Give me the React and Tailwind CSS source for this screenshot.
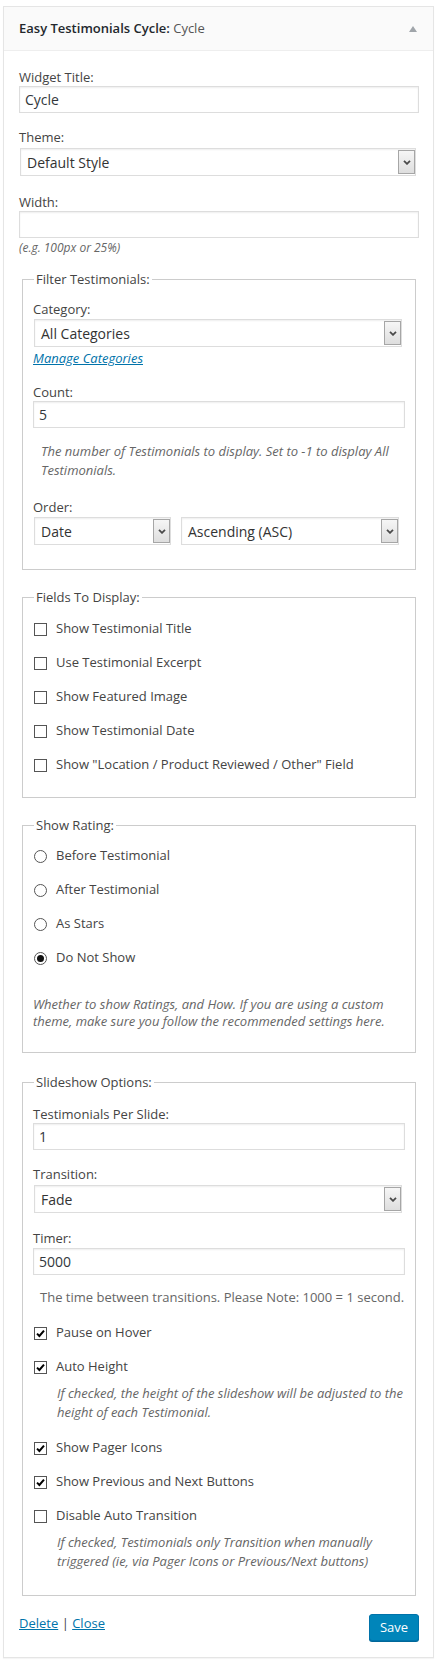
import React from 'react';

const Label = ({ children, className = '' }) => (
  <label className={`block text-[13px] leading-[18px] text-[#444] ${className}`}>{children}</label>
);

const TextInput = ({ value, className = '' }) => (
  <div
    className={`flex h-[27px] items-center border border-[#ddd] bg-white pl-[5px] text-[14px] text-[#32373c] shadow-[inset_0_1px_2px_rgba(0,0,0,0.07)] ${className}`}
  >
    {value}
  </div>
);

const Chevron = () => (
  <svg width="8" height="5" viewBox="0 0 8 5">
    <polyline points="1,0.8 4,3.8 7,0.8" fill="none" stroke="#4a4a4a" strokeWidth="1.8" />
  </svg>
);

const Select = ({ value, className = '' }) => (
  <div
    className={`flex h-[28px] items-stretch border border-[#ddd] bg-white shadow-[inset_0_1px_2px_rgba(0,0,0,0.07)] ${className}`}
  >
    <span className="flex flex-1 items-center pl-[6px] text-[14px] text-[#333]">{value}</span>
    <span className="my-[1px] flex w-[17px] items-center justify-center border border-[#a6a6a6] bg-gradient-to-b from-[#f6f6f6] to-[#dedede]">
      <Chevron />
    </span>
  </div>
);

const Fieldset = ({ legend, className = '', children }) => (
  <fieldset className={`mx-[3px] border border-[#ccc] px-[10px] ${className}`}>
    <legend className="ml-[1px] px-[2px] text-[13px] leading-[18px] text-[#444]">{legend}</legend>
    {children}
  </fieldset>
);

const Checkbox = ({ checked }) => (
  <span className="ml-[1px] flex h-[13px] w-[13px] shrink-0 items-center justify-center border border-[#555] bg-white">
    {checked && (
      <svg width="9" height="9" viewBox="0 0 9 9">
        <path d="M1 4.6 L3.4 7 L8 1.6" fill="none" stroke="#000" strokeWidth="2" />
      </svg>
    )}
  </span>
);

const Radio = ({ checked }) => (
  <span className="ml-[1px] flex h-[13px] w-[13px] shrink-0 items-center justify-center rounded-full border border-[#555] bg-white">
    {checked && <span className="h-[7px] w-[7px] rounded-full bg-[#111]" />}
  </span>
);

const CheckRow = ({ label, checked }) => (
  <div className="flex h-[34px] items-center gap-[9px] text-[13px] text-[#444]">
    <Checkbox checked={checked} />
    <span>{label}</span>
  </div>
);

const RadioRow = ({ label, checked }) => (
  <div className="flex h-[34px] items-center gap-[9px] text-[13px] text-[#444]">
    <Radio checked={checked} />
    <span>{label}</span>
  </div>
);

const fields = [
  'Show Testimonial Title',
  'Use Testimonial Excerpt',
  'Show Featured Image',
  'Show Testimonial Date',
  'Show "Location / Product Reviewed / Other" Field',
];

const ratings = [
  { label: 'Before Testimonial', checked: false },
  { label: 'After Testimonial', checked: false },
  { label: 'As Stars', checked: false },
  { label: 'Do Not Show', checked: true },
];

export default function App() {
  return (
    <div className="min-h-[1664px] bg-white px-[3px] pt-[6px] font-['Open_Sans',sans-serif] text-[#444]">
      <div className="border border-[#e5e5e5] bg-white shadow-[0_1px_1px_rgba(0,0,0,0.04)]">
        {/* header */}
        <div className="flex h-[44px] items-center justify-between border-b border-[#eee] bg-[#fafafa] pl-[15px] pr-[16px]">
          <h3 className="text-[13px] font-semibold text-[#23282d]">
            Easy Testimonials Cycle: <span className="font-normal text-[#555]">Cycle</span>
          </h3>
          <svg width="8" height="6" viewBox="0 0 8 6">
            <polygon points="0,6 4,0 8,6" fill="#a0a5aa" />
          </svg>
        </div>

        {/* body */}
        <div className="pb-[16px] pl-[15px] pr-[14px] pt-[17px]">
          <Label>Widget Title:</Label>
          <TextInput value="Cycle" />

          <Label className="mt-[15px]">Theme:</Label>
          <Select value="Default Style" className="ml-[1px] mt-[2px] w-[396px]" />

          <Label className="mt-[17px]">Width:</Label>
          <TextInput value="" />
          <p className="mt-[2px] text-[12px] italic leading-[16px] text-[#666]">(e.g. 100px or 25%)</p>

          <Fieldset legend="Filter Testimonials:" className="mt-[14px] pb-[24px]">
            <Label className="mt-[12px]">Category:</Label>
            <Select value="All Categories" className="ml-[1px] mt-[1px] w-[368px]" />
            <a className="mt-[2px] block text-[13px] italic leading-[18px] text-[#0073aa] underline">
              Manage Categories
            </a>
            <Label className="mt-[16px]">Count:</Label>
            <TextInput value="5" />
            <p className="mt-[14px] pl-[8px] text-[13px] italic leading-[19px] text-[#666]">
              The number of Testimonials to display. Set to -1 to display All Testimonials.
            </p>
            <Label className="mt-[18px]">Order:</Label>
            <div className="mt-[1px] flex">
              <Select value="Date" className="ml-[1px] w-[137px]" />
              <Select value="Ascending (ASC)" className="ml-[10px] w-[218px]" />
            </div>
          </Fieldset>

          <Fieldset legend="Fields To Display:" className="mt-[18px] pb-[15px]">
            <div className="mt-[6px]">
              {fields.map((f) => (
                <CheckRow key={f} label={f} />
              ))}
            </div>
          </Fieldset>

          <Fieldset legend="Show Rating:" className="mt-[18px] pb-[22px]">
            <div className="mt-[5px]">
              {ratings.map((r) => (
                <RadioRow key={r.label} label={r.label} checked={r.checked} />
              ))}
            </div>
            <p className="mt-[21px] text-[13px] italic leading-[17px] text-[#666]">
              Whether to show Ratings, and How. If you are using a custom theme, make sure you follow the
              recommended settings here.
            </p>
          </Fieldset>

          <Fieldset legend="Slideshow Options:" className="mt-[20px] pb-[24px]">
            <Label className="mt-[14px]">Testimonials Per Slide:</Label>
            <TextInput value="1" />
            <Label className="mt-[15px]">Transition:</Label>
            <Select value="Fade" className="ml-[1px] mt-[2px] w-[368px]" />
            <Label className="mt-[16px]">Timer:</Label>
            <TextInput value="5000" className="mt-[1px]" />
            <p className="mt-[13px] pl-[7px] text-[13px] leading-[18px] text-[#666]">
              The time between transitions. Please Note: 1000 = 1 second.
            </p>
            <div className="mt-[10px]">
              <CheckRow label="Pause on Hover" checked />
              <CheckRow label="Auto Height" checked />
            </div>
            <p className="pl-[24px] text-[13px] italic leading-[19px] text-[#666]">
              If checked, the height of the slideshow will be adjusted to the height of each Testimonial.
            </p>
            <div className="mt-[9px]">
              <CheckRow label="Show Pager Icons" checked />
              <CheckRow label="Show Previous and Next Buttons" checked />
              <CheckRow label="Disable Auto Transition" />
            </div>
            <p className="pl-[24px] text-[13px] italic leading-[19px] text-[#666]">
              If checked, Testimonials only Transition when manually triggered (ie, via Pager Icons or
              Previous/Next buttons)
            </p>
          </Fieldset>

          {/* footer */}
          <div className="mt-[18px] flex items-start justify-between">
            <div className="text-[13px] leading-[18px] text-[#444]">
              <a className="text-[#0073aa] underline">Delete</a> | <a className="text-[#0073aa] underline">Close</a>
            </div>
            <button className="h-[27px] w-[50px] rounded-[3px] border border-[#0073aa] bg-[#0085ba] text-[13px] text-white shadow-[0_1px_0_#006799]">
              Save
            </button>
          </div>
        </div>
      </div>
    </div>
  );
}
